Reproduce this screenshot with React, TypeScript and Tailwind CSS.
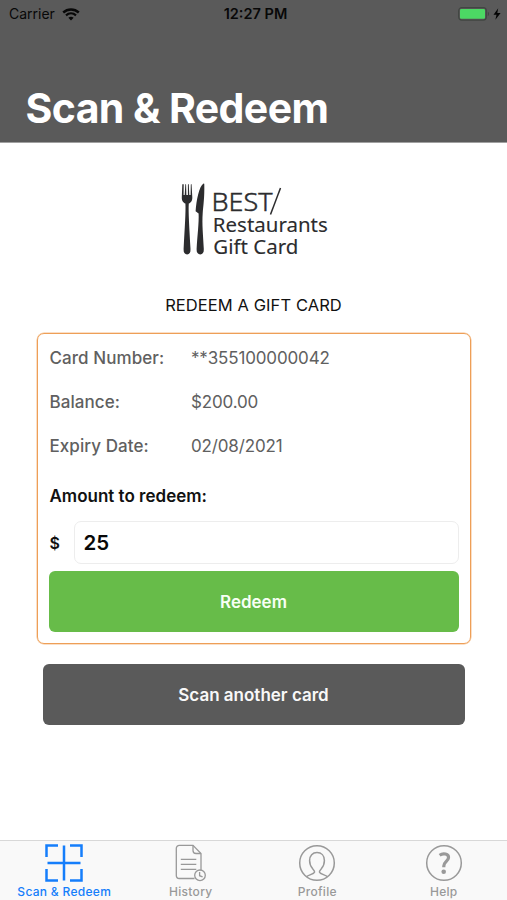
import { useState, type ReactNode } from "react";

type Tab = "scan" | "history" | "profile" | "help";

const details = [
  { label: "Card Number:", value: "**355100000042" },
  { label: "Balance:", value: "$200.00" },
  { label: "Expiry Date:", value: "02/08/2021" },
];

function WifiIcon() {
  return (
    <svg width="18" height="13" viewBox="0 0 18 13" fill="none" stroke="#080808">
      <path d="M1.2 4.5C5.6.4 12.4.4 16.8 4.5" strokeWidth="2.4" />
      <path d="M4 7.4c2.9-2.6 7.1-2.6 10 0" strokeWidth="2.2" />
      <path d="M9 12.4 6.4 9.8c1.4-1.4 3.8-1.4 5.2 0z" fill="#080808" stroke="none" />
    </svg>
  );
}

function BatteryIcon() {
  return (
    <svg width="44" height="14" viewBox="0 0 44 14">
      <rect x=".7" y=".7" width="27.6" height="12.4" rx="3" fill="none" stroke="#414642" strokeWidth="1.2" />
      <rect x="2" y="2" width="25" height="9.8" rx="1.2" fill="#4cd964" />
      <path d="M29.8 4.8c1.6.5 1.6 3.7 0 4.2z" fill="#414642" />
      <path d="M40.2 1.2 35.5 7.8h3l-1.1 5 5.200-6.900h-3.300z" fill="#050505" />
    </svg>
  );
}

function StatusBar() {
  return (
    <div className="grid h-7 grid-cols-3 items-center pl-[9px] pr-[5px] text-[#080808]">
      <div className="flex items-center gap-[7px]">
        <span className="text-[14px] leading-none">Carrier</span>
        <WifiIcon />
      </div>
      <span className="text-center text-[14.5px] font-semibold leading-none whitespace-nowrap">12:27 PM</span>
      <div className="flex justify-end">
        <BatteryIcon />
      </div>
    </div>
  );
}

function Logo() {
  return (
    <svg width="150" height="84" viewBox="-1 0 150 84" fill="#2c2c2e">
      {/* fork */}
      <path d="M3 3c-.5 0-.7.4-.7.9L1.800 16c-.1 4 1.200 5.400 3.600 6.600.5 8-.7 25-1.800 45.500-.2 3.700 1.200 5.400 3.500 5.400s3.600-1.700 3.400-5.400C9.400 47.600 8.200 30.600 8.800 22.600c2.400-1.200 3.600-2.600 3.500-6.600L11.600 3.900c0-1.200-.8-1.200-.8 0l-.2 10.200H9.300L8.800 3.900c0-1.200-.9-1.200-.9 0v10.200H6.400L6.100 3.900c0-1.200-.8-1.200-.8 0L4.700 14.100H3.600L3.700 3.900C3.700 3.300 3.500 3 3 3z" />
      {/* knife */}
      <path d="M23.600 2.500c-4.500 2.500-7.200 16.700-8 27.800l3 2.200c.5 9-1.200 21.500-2 35.600-.2 3.700 1.400 5.400 3.700 5.400s3.700-1.700 3.500-5.400c-.7-14.800-1.900-25-1.100-35.800.5-7 1.900-15.300 1.600-28.800 0-.9-.1-1.200-.7-1z" />
      <g className="font-['Noto_Sans',sans-serif]">
        <text x="31.500" y="30" fontSize="26.500" fontWeight="300" stroke="#2c2c2e" strokeWidth=".45" textLength="61" lengthAdjust="spacingAndGlyphs">BEST</text>
        <text x="32.800" y="50.500" fontSize="19.500" fontWeight="400" textLength="115" lengthAdjust="spacingAndGlyphs" stroke="#2c2c2e" strokeWidth=".1">Restaurants</text>
        <text x="33.300" y="72.500" fontSize="19.500" fontWeight="400" textLength="85" lengthAdjust="spacingAndGlyphs" stroke="#2c2c2e" strokeWidth=".1">Gift Card</text>
      </g>
      <path d="M100.500 7 90.500 33.500" stroke="#2c2c2e" strokeWidth="1.500" fill="none" />
    </svg>
  );
}

function ScanIcon() {
  return (
    <svg width="38" height="38" viewBox="0 0 38 38" fill="none" stroke="currentColor" strokeWidth="2.500">
      <path d="M1.500 13V1.500H13M25 1.500h11.500V13M36.500 25v11.500H25M13 36.500H1.500V25M19 1.500v35M2.500 19h33" />
    </svg>
  );
}

function HistoryIcon() {
  return (
    <svg width="38" height="38" viewBox="0 0 38 38" fill="none" stroke="currentColor" strokeWidth="1.300">
      <path d="M22.500 34.500H7.300a3 3 0 0 1-3-3V4.300a3 3 0 0 1 3-3H21l8 8.200v17" />
      <path d="M21 1.300v5.200a3 3 0 0 0 3 3h5M8.800 15.300h15.500M8.800 20.300h15.500M8.800 25.300h15.500" />
      <circle cx="28" cy="31.300" r="5.300" />
      <path d="M27.600 28v3.700l3 1.200" />
    </svg>
  );
}

function ProfileIcon() {
  return (
    <svg width="38" height="38" viewBox="0 0 38 38" fill="none" stroke="currentColor" strokeWidth="1.500">
      <circle cx="19" cy="19" r="17.300" />
      <path d="M8.500 32.700c2-2 7.200-2.400 8-4.400.5-1.200-.7-2.300-1.800-3.500C12.600 22.400 11.600 19.500 11.600 16.500c0-4.700 3-7.900 7.400-7.900s7.400 3.200 7.400 7.900c0 3-1 5.900-3.100 8.300-1.100 1.200-2.300 2.300-1.800 3.500.8 2 6 2.400 8 4.400" />
    </svg>
  );
}

function HelpIcon() {
  return (
    <svg width="38" height="38" viewBox="0 0 38 38" fill="none" stroke="currentColor" strokeWidth="1.500">
      <circle cx="19" cy="19" r="17.300" />
      <path d="M14.600 11.200c3.500-2.500 9.400-1.500 8.900 2.700-.4 3.300-4.700 4-4.700 8.100v1.300" strokeWidth="3.200" />
      <circle cx="18.700" cy="27.700" r="2.300" fill="currentColor" stroke="none" />
    </svg>
  );
}

const tabs: { id: Tab; label: string; icon: ReactNode }[] = [
  { id: "scan", label: "Scan & Redeem", icon: <ScanIcon /> },
  { id: "history", label: "History", icon: <HistoryIcon /> },
  { id: "profile", label: "Profile", icon: <ProfileIcon /> },
  { id: "help", label: "Help", icon: <HelpIcon /> },
];

function TabBar({ active, onChange }: { active: Tab; onChange: (tab: Tab) => void }) {
  return (
    <nav className="grid h-[60px] shrink-0 grid-cols-4 border-t border-[#d8d8d8] bg-[#f9f9f9] pl-px">
      {tabs.map((tab) => (
        <button
          key={tab.id}
          type="button"
          onClick={() => onChange(tab.id)}
          className={`flex flex-col items-center pt-[3px] ${active === tab.id ? "text-[#157efb]" : "text-[#999999]"}`}
        >
          {tab.icon}
          <span className="mt-[2px] text-[12px] font-medium leading-[15px] tracking-[0.3px] whitespace-nowrap">{tab.label}</span>
        </button>
      ))}
    </nav>
  );
}

export default function App() {
  const [amount, setAmount] = useState("25");
  const [tab, setTab] = useState<Tab>("scan");

  return (
    <div className="flex h-screen w-full flex-col overflow-hidden bg-white font-['Inter',sans-serif]">
      <header className="h-[143px] shrink-0 border-b border-[#a0a0a0] bg-[#5a5a5a]">
        <StatusBar />
        <h1 className="mt-[55px] pl-[25.500px] text-[41px] font-bold leading-[50px] tracking-[-0.6px] text-white">Scan &amp; Redeem</h1>
      </header>

      <main className="flex grow flex-col items-center pt-[38px]">
        <Logo />
        <h2 className="mt-[30px] text-[16.500px] leading-5 tracking-[0.08px] text-[#111111]">REDEEM A GIFT CARD</h2>

        <section className="mt-[18px] h-[311px] w-[434px] rounded-[7px] border border-[#ee9f57] px-[11px] pt-[3px] shadow-[0_0_0_0.5px_#f5c08f]">
          <dl className="pl-px">
            {details.map((row) => (
              <div key={row.label} className="flex h-11 items-center text-[17px] text-[#606060]">
                <dt className="w-[141.500px] font-medium tracking-[0.07px]">{row.label}</dt>
                <dd className="tracking-[-0.15px]">{row.value}</dd>
              </div>
            ))}
          </dl>
          <label htmlFor="amount" className="mt-[17px] block pl-px text-[17px] font-semibold leading-5 text-[#111111]">
            Amount to redeem:
          </label>
          <div className="mt-[15px] flex items-center">
            <span className="w-[25px] pl-px text-[16px] font-semibold text-[#111111]">$</span>
            <input
              id="amount"
              value={amount}
              onChange={(e) => setAmount(e.target.value)}
              className="h-[43px] w-[385px] rounded-[7px] border border-[#ededed] bg-white px-[9px] text-[20.500px] font-semibold text-[#080808] outline-none"
            />
          </div>
          <button type="button" className="mt-[7px] h-[61px] w-[410px] rounded-md bg-[#67bc49] pt-[3px] text-[17px] font-semibold text-[#f7fff4]">
            Redeem
          </button>
        </section>

        <button type="button" className="mt-5 h-[61px] w-[422px] rounded-md bg-[#5a5a5a] pt-[3px] text-[17px] font-semibold text-[#f8f8f8]">
          Scan another card
        </button>
      </main>

      <TabBar active={tab} onChange={setTab} />
    </div>
  );
}
